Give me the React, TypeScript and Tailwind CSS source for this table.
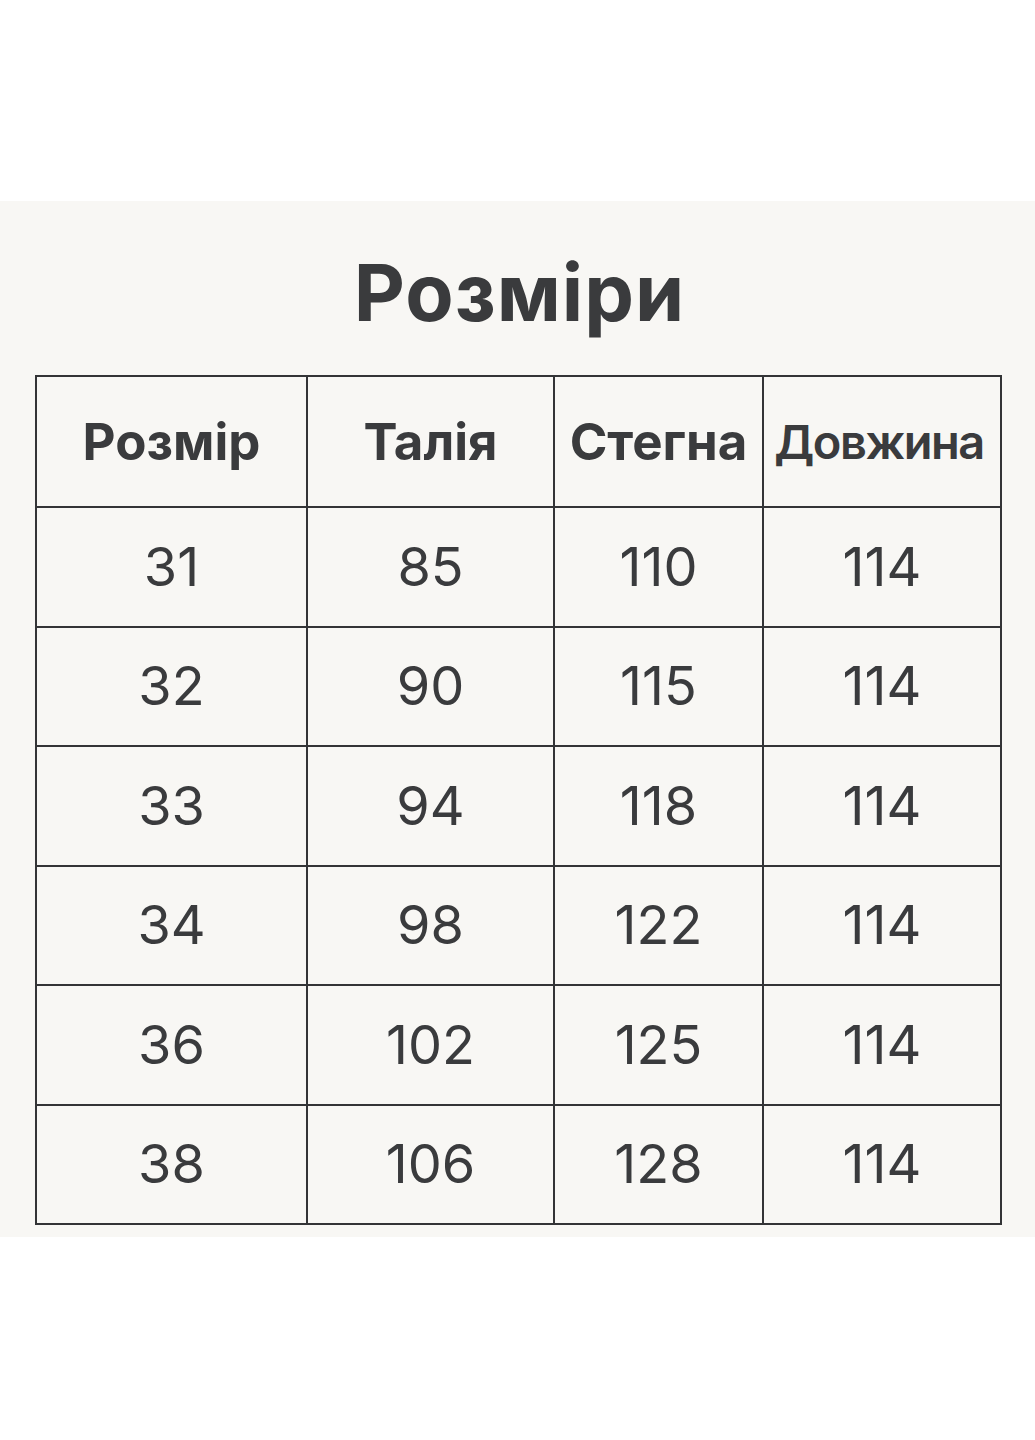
const headers = ["Розмір", "Талія", "Стегна", "Довжина"];

const rows = [
  ["31", "85", "110", "114"],
  ["32", "90", "115", "114"],
  ["33", "94", "118", "114"],
  ["34", "98", "122", "114"],
  ["36", "102", "125", "114"],
  ["38", "106", "128", "114"],
];

const colWidths = ["w-[271px]", "w-[247px]", "w-[209px]", "w-[238px]"];

export default function App() {
  return (
    <div className="w-[1035px] h-[1440px] bg-white font-['Inter','Liberation_Sans',sans-serif] text-[#3a3b3d]">
      <div className="h-[201px]" />
      <div className="h-[1036px] bg-[#f8f7f4] flex flex-col items-center">
        <h1 className="mt-[30px] h-[144px] pb-[22px] text-[79px] font-bold leading-none tracking-[1px] flex items-center pl-[4px]">
          Розміри
        </h1>
        <table className="border-collapse border-2 border-[#333436] ml-[2px]">
          <thead>
            <tr className="h-[131px]">
              {headers.map((h, i) => (
                <th
                  key={h}
                  className={`${colWidths[i]} border-2 border-[#333436] p-0 leading-none text-center ${
                    i === 3
                      ? "text-[47px] font-semibold tracking-[-1.5px] pr-[6px]"
                      : "text-[51px] font-bold"
                  }`}
                >
                  {h}
                </th>
              ))}
            </tr>
          </thead>
          <tbody>
            {rows.map((r) => (
              <tr key={r[0]} className="h-[119.5px]">
                {r.map((c, i) => (
                  <td
                    key={i}
                    className="border-2 border-[#333436] p-0 text-[54px] font-normal leading-none text-center"
                  >
                    {c}
                  </td>
                ))}
              </tr>
            ))}
          </tbody>
        </table>
      </div>
    </div>
  );
}
